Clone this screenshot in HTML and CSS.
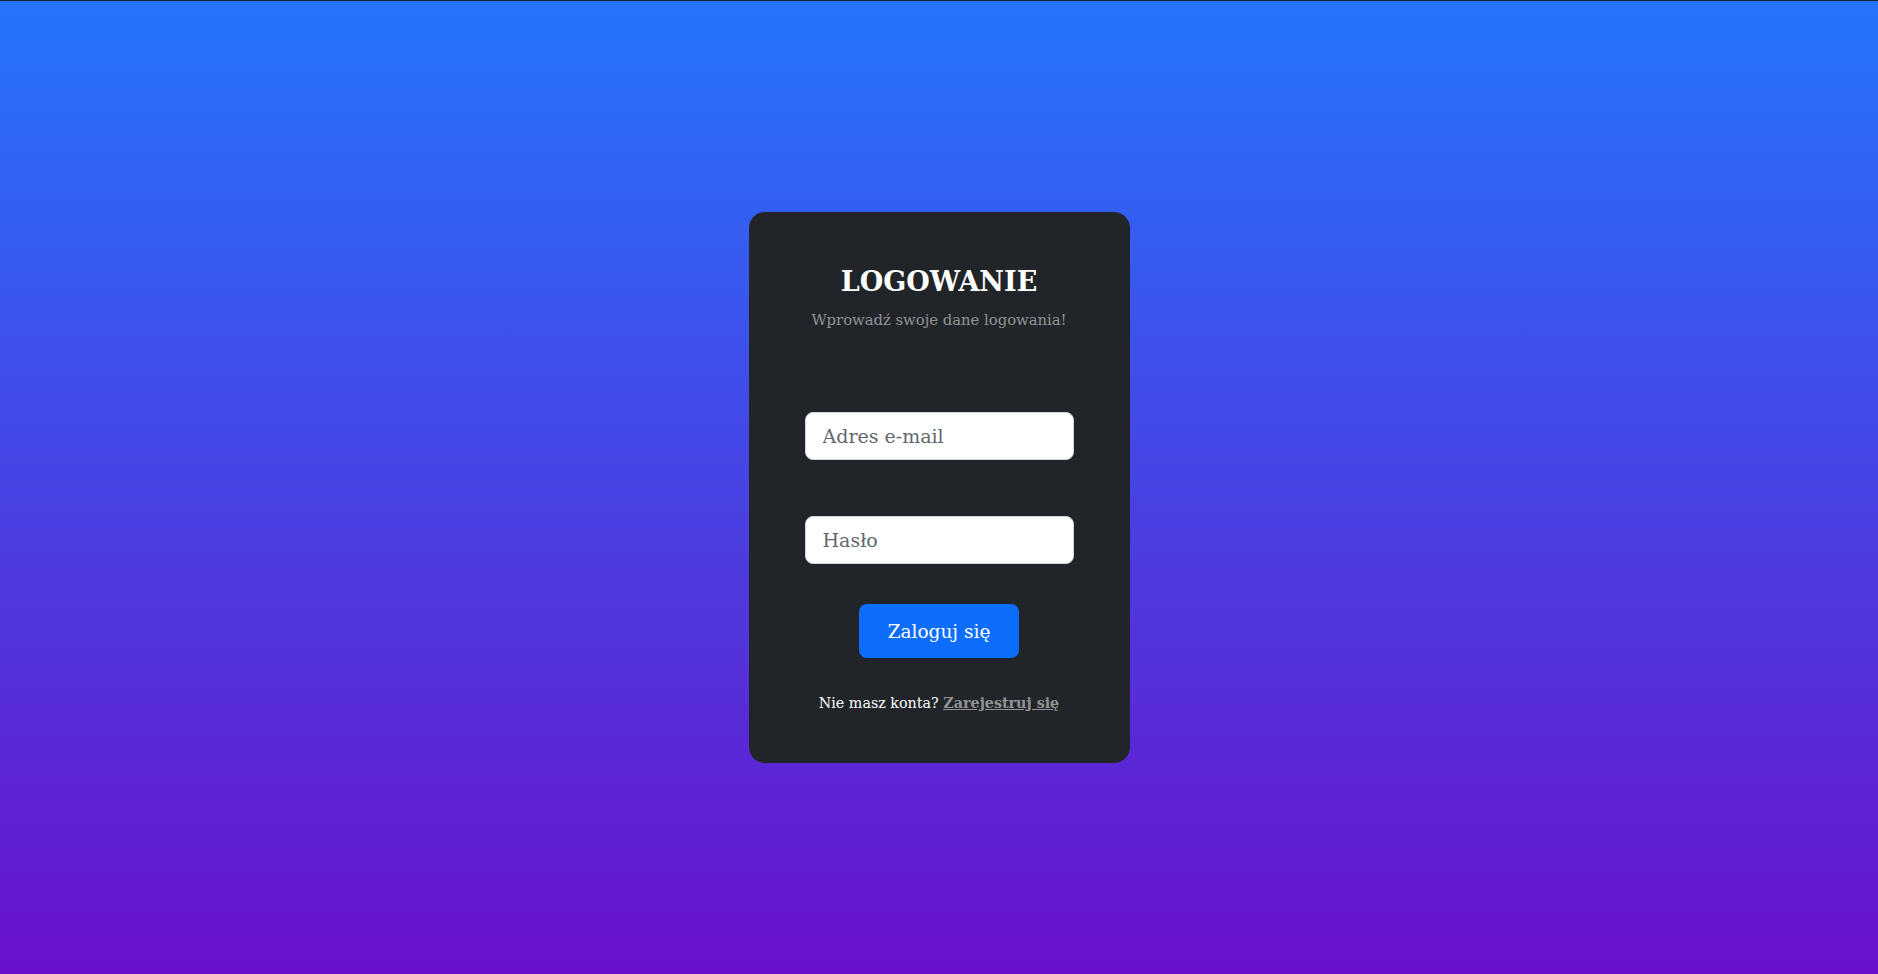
FILE: index.html
```html
<!DOCTYPE html>
<html lang="pl">
<head>
<meta charset="utf-8">
<title>Logowanie</title>
<link rel="stylesheet" href="styles.css">
</head>
<body>
<main class="page">
  <section class="card">
    <h2 class="title">LOGOWANIE</h2>
    <p class="subtitle">Wprowadź swoje dane logowania!</p>
    <form class="form">
      <input class="field" type="email" placeholder="Adres e-mail">
      <input class="field" type="password" placeholder="Hasło">
      <button class="btn" type="button">Zaloguj się</button>
    </form>
    <p class="signup">Nie masz konta? <a class="signup-link" href="#">Zarejestruj się</a></p>
  </section>
</main>
</body>
</html>
```

FILE: styles.css
```css
html, body {
  margin: 0;
  padding: 0;
  height: 100%;
}
body {
  font-family: "DejaVu Serif", "Liberation Serif", serif;
  background: linear-gradient(to bottom, #2575fc, #6a11cb);
  border-top: 1px solid #1c2230;
  box-sizing: border-box;
}
.page {
  height: 100%;
  display: flex;
  align-items: center;
  justify-content: center;
}
.card {
  width: 381px;
  height: 551px;
  box-sizing: border-box;
  background: #212529;
  border-radius: 16px;
  padding: 54px 56px 0;
  display: flex;
  flex-direction: column;
  align-items: center;
  color: #fff;
}
.title {
  margin: 0;
  font-size: 27px;
  font-weight: bold;
  line-height: 1.2;
}
.subtitle {
  margin: 13px 0 0;
  font-size: 14.8px;
  color: rgba(255,255,255,0.5);
}
.form {
  width: 100%;
  display: flex;
  flex-direction: column;
  align-items: center;
  margin-top: 84px;
}
.field {
  width: 100%;
  box-sizing: border-box;
  height: 48px;
  padding: 0 17px;
  border: 1px solid #ced4da;
  border-radius: 8px;
  background: #fff;
  font-family: inherit;
  font-size: 19px;
  color: #212529;
  outline: none;
}
.field::placeholder {
  color: #62676c;
}
.field + .field {
  margin-top: 56px;
}
.btn {
  margin-top: 40px;
  width: 160px;
  height: 54px;
  border: none;
  border-radius: 8px;
  background: #0d6efd;
  color: #fff;
  font-family: inherit;
  font-size: 18.5px;
}
.signup {
  margin: 37px 0 0;
  font-size: 14.3px;
}
.signup-link {
  color: rgba(255,255,255,0.5);
  font-weight: bold;
}
```
